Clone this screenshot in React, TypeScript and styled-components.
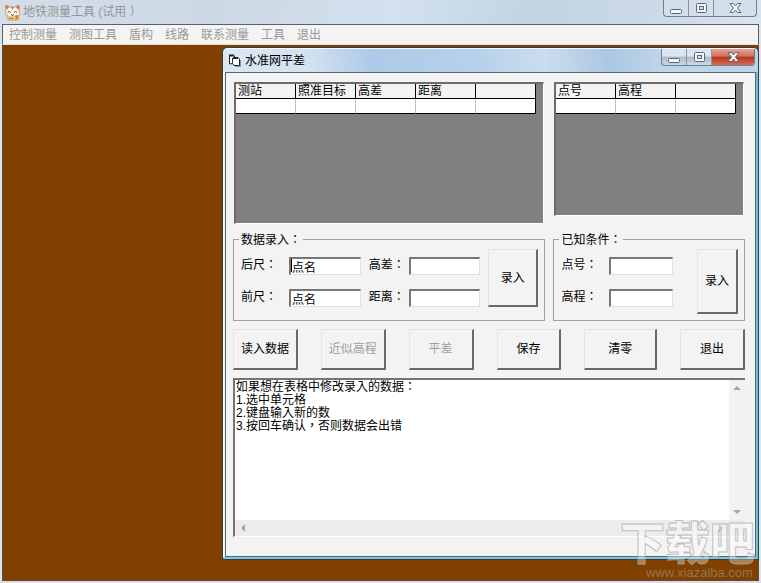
import React from "react";
import styled, { createGlobalStyle, css } from "styled-components";

const GlobalStyle = createGlobalStyle`
  * { box-sizing: border-box; }
  body {
    margin: 0;
    font: 12px/14px "Liberation Sans", "Noto Sans CJK SC", sans-serif;
    color: #000;
  }
  button, input, textarea { font: inherit; color: inherit; }
`;

const MainWindow = styled.div`
  display: flex;
  flex-direction: column;
  height: 100vh;
  min-height: 480px;
  padding: 0 2px;
  background: #dce5ee;
  border-bottom: 2px solid #dcdcdc;
`;

const MainTitle = styled.header`
  display: flex;
  align-items: center;
  gap: 2px;
  height: 24px;
  flex: none;
  margin: 0 -2px;
  padding: 0 4px;
  color: #969696;
  background: linear-gradient(100deg, #d3deea 0%, #ccd8e4 28%, #d3e1ee 52%, #c3d3e3 70%, #cbd9e7 85%, #dae4ee 100%);
`;

const TitleText = styled.h1`
  flex: 1;
  margin: 0;
  font-size: 12px;
  font-weight: normal;
  white-space: nowrap;
`;

const MenuBar = styled.nav`
  display: flex;
  gap: 12px;
  align-items: center;
  height: 21px;
  flex: none;
  padding: 0 6px;
  background: #f5f4f3;
  border: 1px solid #56616e;
  border-bottom-color: #e6dccf;
`;

const MenuItem = styled.button`
  padding: 0;
  border: 0;
  background: none;
  color: #989898;
  white-space: nowrap;
`;

const Desktop = styled.main`
  position: relative;
  flex: 1;
  background: #804000;
  border: 1px solid #5a4a40;
  border-top: 0;
`;

const ChildWindow = styled.section`
  position: absolute;
  inset: 2px -1px 20px 219px;
  display: flex;
  flex-direction: column;
  padding: 0 2px 2px;
  border: 1px solid #2f3f48;
  border-radius: 6px 6px 0 0;
  background: linear-gradient(90deg, #edf2f7 0%, #e6eff6 60%, #72bfd4 100%);
  box-shadow: inset 0 -2px #7fc6d6, inset 1px 1px #f7fbff;
`;

const ChildTitle = styled.header`
  display: flex;
  align-items: center;
  gap: 4px;
  height: 24px;
  flex: none;
  margin: 0 -2px;
  padding: 0 3px 0 5px;
  border-radius: 5px 5px 0 0;
  border-top: 1px solid #f4f9ff;
  background: linear-gradient(80deg, #dae7f2 0%, #d3e2f0 16%, #aecae8 28%, #b7d1eb 48%, #cbddee 60%, #aac7e3 72%, #bfd5ea 82%, #bcd3e9 100%);
`;

const Controls = styled.div<{ $active?: boolean }>`
  display: flex;
  align-self: flex-start;
  height: 17px;
  border: 1px solid #71808f;
  border-top: 0;
  border-radius: 0 0 4px 4px;
  overflow: hidden;
  background: ${(p) => (p.$active ? "linear-gradient(#dce6f0 0 45%, #a9b9c9 50%, #cbd9e6)" : "#d2deea")};
`;

const ControlButton = styled.button<{ $close?: boolean; $active?: boolean }>`
  display: grid;
  place-items: center;
  width: ${(p) => (p.$close ? 42 : 25)}px;
  padding: 0;
  border: 0;
  border-right: ${(p) => (p.$close ? "0" : "1px solid #8794a2")};
  background: ${(p) => (p.$close && p.$active ? "linear-gradient(#e7a294 0, #d6705c 45%, #b93420 50%, #d66a4d)" : "none")};
`;

const Client = styled.div`
  flex: 1;
  display: flex;
  flex-direction: column;
  gap: 8px;
  min-height: 0;
  padding: 9px 10px 19px 7px;
  border: 1px solid #526878;
  background: #f3f3f3;
`;

const split = css`
  display: grid;
  grid-template-columns: minmax(0, 313fr) minmax(0, 192fr);
`;

const GridRow = styled.div`
  ${split}
  gap: 10px;
  height: 142px;
  flex: none;
  padding: 0 1px;
`;

const GridPane = styled.div<{ $short?: boolean }>`
  height: ${(p) => (p.$short ? 134 : 142)}px;
  border: 1px solid #8c8c8c;
  border-top: 2px solid #6b6b6b;
  border-left: 2px solid #6b6b6b;
  border-right-color: #fff;
  border-bottom-color: #fff;
  background: #808080;
`;

const Table = styled.table`
  table-layout: fixed;
  width: calc(100% - 7px);
  border-collapse: separate;
  border-spacing: 0;
  th, td {
    height: 15px;
    padding: 0 2px;
    border-right: 1px solid #000;
    border-bottom: 1px solid #000;
    line-height: 14px;
    text-align: left;
    font-weight: normal;
    white-space: nowrap;
  }
  th { background: #f3f3f3; }
  td { background: #fff; border-right-color: #c0c0c0; }
  td:last-child { border-right-color: #000; }
`;

const GroupRow = styled.div`
  ${split}
  gap: 8px;
  flex: none;
`;

const Group = styled.fieldset`
  min-width: 0;
  margin: 0;
  padding: 3px 6px 6px 7px;
  border: 1px solid #a0a0a0;
`;

const Legend = styled.legend`
  margin-left: -2px;
  padding: 0 2px;
  height: 14px;
`;

const GroupBody = styled.div<{ $gap: number }>`
  display: flex;
  align-items: flex-start;
  gap: ${(p) => p.$gap}px;
  height: 65px;
`;

const Fields = styled.div<{ $pairs: number }>`
  flex: 1;
  min-width: 0;
  display: grid;
  grid-template-columns: ${(p) =>
    p.$pairs === 2 ? "40px minmax(0, 1fr) 32px minmax(0, 1fr)" : "40px minmax(0, 1fr)"};
  gap: 14px 8px;
  padding-top: 8px;
`;

const Label = styled.label`
  line-height: 14px;
  white-space: nowrap;
`;

const Colon = styled.span`
  font-family: "Noto Sans CJK TC", sans-serif;
`;

const TextBox = styled.input<{ $caret?: boolean }>`
  width: 100%;
  height: 18px;
  padding: 0 1px;
  border: 1px solid #e0e0e0;
  border-top: 2px solid #777;
  border-left: 2px solid #777;
  border-radius: 0;
  outline: 0;
  background: ${(p) => (p.$caret ? "linear-gradient(#000, #000) 0 0 / 1px 13px no-repeat #fff" : "#fff")};
`;

const PushButton = styled.button<{ $width?: number; $height: number }>`
  width: ${(p) => (p.$width ? `${p.$width}px` : "100%")};
  height: ${(p) => p.$height}px;
  flex: none;
  padding: 0;
  border: 1px solid #e3e3e3;
  border-right: 2px solid #696969;
  border-bottom: 2px solid #696969;
  border-radius: 0;
  background: #f3f3f3;
  white-space: nowrap;
  &:disabled { color: #a0a0a0; }
`;

const ActionRow = styled.div`
  display: grid;
  grid-template-columns: repeat(4, minmax(0, 65fr)) minmax(0, 73fr) minmax(0, 65fr);
  gap: 23px;
  flex: none;
`;

const Memo = styled.div`
  flex: 1;
  min-height: 0;
  display: grid;
  grid-template: minmax(0, 1fr) 16px / minmax(0, 1fr) 16px;
  border-top: 2px solid #747474;
  border-left: 2px solid #747474;
  border-bottom: 1px solid #fff;
  background: #ececec;
`;

const MemoText = styled.textarea`
  padding: 1px 1px 0;
  border: 0;
  outline: 0;
  resize: none;
  overflow: hidden;
  background: #fff;
  font-family: "Liberation Sans", "Noto Sans CJK TC", sans-serif;
  line-height: 13px;
  white-space: pre;
`;

const ScrollBar = styled.div<{ $vertical?: boolean }>`
  display: flex;
  flex-direction: ${(p) => (p.$vertical ? "column" : "row")};
  justify-content: space-between;
  background: ${(p) => (p.$vertical ? "#f2f2f2" : "#ececec")};
`;

const ScrollButton = styled.button`
  display: grid;
  place-items: center;
  width: 16px;
  height: 16px;
  padding: 0;
  border: 0;
  background: none;
`;

const Watermark = styled.svg`
  position: absolute;
  right: 1px;
  bottom: 0;
  overflow: visible;
  pointer-events: none;
`;

function WindowControls({ active }: { active?: boolean }) {
  const line = { fill: "#f5f7fa", stroke: "#5b6673" };
  return (
    <Controls $active={active}>
      <ControlButton type="button" aria-label="最小化">
        <svg width="13" height="13"><rect x="0.5" y="7.5" width="11" height="4" rx="1" {...line} /></svg>
      </ControlButton>
      <ControlButton type="button" aria-label="最大化">
        <svg width="13" height="13">
          <rect x="1.5" y="1.5" width="10" height="9" rx="1" {...line} />
          <rect x="4.5" y="4.5" width="4" height="3" fill="#dce4ed" stroke="#5b6673" />
        </svg>
      </ControlButton>
      <ControlButton type="button" aria-label="关闭" $close $active={active}>
        <svg width="13" height="12">
          <path d="M1 1.5h3.5L6.5 4l2-2.500H12L8.500 6l3.500 4.500H8.500L6.500 8l-2 2.500H1L4.500 6z" {...line} />
        </svg>
      </ControlButton>
    </Controls>
  );
}

function CatIcon() {
  return (
    <svg width="17" height="17" viewBox="0 0 17 17">
      <path d="M2 6 1.500 1.500Q4 .500 6 3h5q2-2.500 4.500-1.500L15 6q2 4-1 7-5 3-11 0-3-3-1-7z" fill="#fffaf0" stroke="#c29a72" />
      <path d="M1.500 1.500 5.500 3 2.500 6zM15.500 1.500 11.500 3l3 3zM7 3h3L8.500 6z" fill="#d9703a" />
      <path d="M3.500 8.500q1.500-2 3 0M10 8.500q1.500-2 3 0M7 10.500l1.500 1 1.500-1" fill="none" stroke="#4e382c" />
      <circle cx="3.500" cy="11" r="1" fill="#f0a090" />
      <path d="M4 13h8v3H4z" fill="#fff1d0" stroke="#c99748" />
      <path d="M11 11h4v5h-4z" fill="#efa03d" />
      <path d="M12.500 11v4M5 14.500h5" stroke="#c9752f" />
    </svg>
  );
}

function FormIcon() {
  return (
    <svg width="13" height="13" viewBox="0 0 13 13">
      <path d="M1.500 10V1.500H6L7 3.500h3L11.500 5v6.500H6L4.500 9.500z" fill="#fff" stroke="#222" />
      <path d="M1 1.500h5M5 4h5" stroke="#16233b" strokeWidth="2" />
      <path d="M4.500 4v5.500" stroke="#333" />
      <path d="M12.500 6v6.500H7" fill="none" stroke="#8a929c" />
    </svg>
  );
}

function DataGrid({ heads, short, label }: { heads: string[]; short?: boolean; label: string }) {
  return (
    <GridPane $short={short}>
      <Table aria-label={label}>
        <thead><tr>{heads.map((h, i) => <th key={i} scope="col">{h}</th>)}</tr></thead>
        <tbody><tr>{heads.map((_, i) => <td key={i} />)}</tr></tbody>
      </Table>
    </GridPane>
  );
}

function Field({ id, text, value, caret }: { id: string; text: string; value?: string; caret?: boolean }) {
  return (
    <>
      <Label htmlFor={id}>{text}<Colon>：</Colon></Label>
      <TextBox id={id} type="text" defaultValue={value} $caret={caret} />
    </>
  );
}

const arrows = {
  up: "M0 6 4 2l4 4z",
  down: "M0 2h8L4 6z",
  left: "M6 0v8L2 4z",
  right: "M2 0v8l4-4z",
};

function Arrow({ dir, label }: { dir: keyof typeof arrows; label: string }) {
  return (
    <ScrollButton type="button" aria-label={label}>
      <svg width="8" height="8"><path d={arrows[dir]} fill="#a6a6a6" /></svg>
    </ScrollButton>
  );
}

const menus = ["控制测量", "测图工具", "盾构", "线路", "联系测量", "工具", "退出"];
const actions = [
  { text: "读入数据" },
  { text: "近似高程", disabled: true },
  { text: "平差", disabled: true },
  { text: "保存" },
  { text: "清零" },
  { text: "退出" },
];
const help = "如果想在表格中修改录入的数据：\n1.选中单元格\n2.键盘输入新的数\n3.按回车确认，否则数据会出错";

export default function App() {
  return (
    <>
      <GlobalStyle />
      <MainWindow>
        <MainTitle>
          <CatIcon />
          <TitleText>地铁测量工具 (试用 ）</TitleText>
          <WindowControls />
        </MainTitle>
        <MenuBar>
          {menus.map((m) => <MenuItem key={m} type="button">{m}</MenuItem>)}
        </MenuBar>
        <Desktop>
          <ChildWindow>
            <ChildTitle>
              <FormIcon />
              <TitleText as="h2">水准网平差</TitleText>
              <WindowControls active />
            </ChildTitle>
            <Client>
              <GridRow>
                <DataGrid label="观测数据" heads={["测站", "照准目标", "高差", "距离", ""]} />
                <DataGrid label="已知点" short heads={["点号", "高程", ""]} />
              </GridRow>
              <GroupRow>
                <Group>
                  <Legend>数据录入<Colon>：</Colon></Legend>
                  <GroupBody $gap={8}>
                    <Fields $pairs={2}>
                      <Field id="back" text="后尺" value="点名" caret />
                      <Field id="diff" text="高差" />
                      <Field id="front" text="前尺" value="点名" />
                      <Field id="distance" text="距离" />
                    </Fields>
                    <PushButton type="button" $width={50} $height={58}>录入</PushButton>
                  </GroupBody>
                </Group>
                <Group>
                  <Legend>已知条件<Colon>：</Colon></Legend>
                  <GroupBody $gap={24}>
                    <Fields $pairs={1}>
                      <Field id="point" text="点号" />
                      <Field id="elevation" text="高程" />
                    </Fields>
                    <PushButton type="button" $width={41} $height={65}>录入</PushButton>
                  </GroupBody>
                </Group>
              </GroupRow>
              <ActionRow>
                {actions.map((a) => (
                  <PushButton key={a.text} type="button" $height={41} disabled={a.disabled}>{a.text}</PushButton>
                ))}
              </ActionRow>
              <Memo>
                <MemoText aria-label="操作说明" wrap="off" defaultValue={help} />
                <ScrollBar $vertical>
                  <Arrow dir="up" label="向上滚动" />
                  <Arrow dir="down" label="向下滚动" />
                </ScrollBar>
                <ScrollBar>
                  <Arrow dir="left" label="向左滚动" />
                  <Arrow dir="right" label="向右滚动" />
                </ScrollBar>
              </Memo>
            </Client>
          </ChildWindow>
          <Watermark width="138" height="62" viewBox="0 0 138 62">
            <text x="1" y="42" fontFamily="Noto Sans CJK SC, sans-serif" fontSize="45" fontWeight="900" fill="#fff" fillOpacity="0.35" stroke="#a8a8a8" strokeOpacity="0.7">下载吧</text>
            <text x="27" y="59" fontFamily="Liberation Sans, sans-serif" fontSize="13" fill="#a28468" fillOpacity="0.75">www.xiazaiba.com</text>
          </Watermark>
        </Desktop>
      </MainWindow>
    </>
  );
}
